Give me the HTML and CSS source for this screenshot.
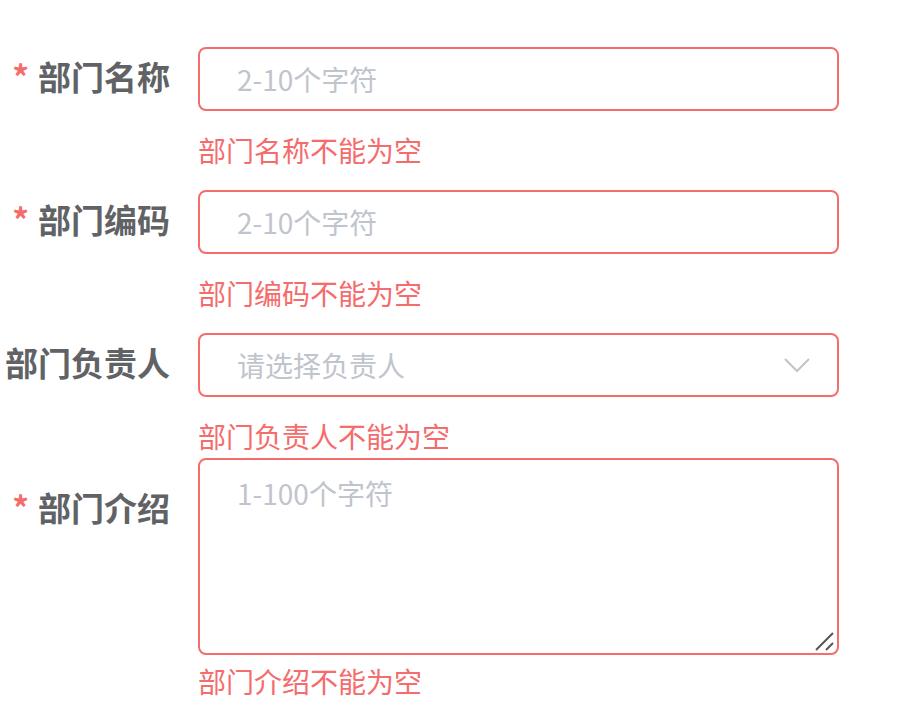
FILE: index.html
```html
<!DOCTYPE html>
<html lang="zh-CN">
<head>
  <meta charset="UTF-8">
  <meta name="viewport" content="width=device-width, initial-scale=1.0">
  <title>部门信息</title>
  <link rel="stylesheet" href="styles.css">
</head>
<body>
  <form class="dept-form">
    <div class="form-item">
      <label class="form-label is-required">部门名称</label>
      <div class="form-content">
        <input class="form-input" type="text" placeholder="2-10个字符">
        <div class="form-error">部门名称不能为空</div>
      </div>
    </div>

    <div class="form-item">
      <label class="form-label is-required">部门编码</label>
      <div class="form-content">
        <input class="form-input" type="text" placeholder="2-10个字符">
        <div class="form-error">部门编码不能为空</div>
      </div>
    </div>

    <div class="form-item form-item--tight">
      <label class="form-label">部门负责人</label>
      <div class="form-content">
        <div class="select-box">
          <input class="form-input" type="text" readonly placeholder="请选择负责人">
          <!-- 下拉箭头 -->
          <svg class="select-arrow" width="26" height="16" viewBox="0 0 26 16">
            <polyline points="1,2 13,14 25,2" fill="none" stroke="#c0c4cc" stroke-width="2"/>
          </svg>
        </div>
        <div class="form-error">部门负责人不能为空</div>
      </div>
    </div>

    <div class="form-item">
      <label class="form-label form-label--top is-required">部门介绍</label>
      <div class="form-content">
        <div class="textarea-box">
          <textarea class="form-textarea" placeholder="1-100个字符"></textarea>
          <!-- 拖拽手柄 -->
          <svg class="resize-grip" width="20" height="20" viewBox="0 0 20 20">
            <line x1="1" y1="19" x2="18" y2="2" stroke="#555" stroke-width="2"/>
            <line x1="11" y1="19" x2="18" y2="12" stroke="#555" stroke-width="2"/>
          </svg>
        </div>
        <div class="form-error form-error--close">部门介绍不能为空</div>
      </div>
    </div>
  </form>
</body>
</html>
```

FILE: styles.css
```css
body {
  margin: 0;
  background: #fff;
  font-family: "Noto Sans CJK SC", "Noto Sans", sans-serif;
}
.dept-form {
  padding-top: 47px;
  width: 839px;
}
.form-item {
  display: flex;
  margin-bottom: 26px;
}
.form-item--tight {
  margin-bottom: 8px;
}
.form-label {
  flex: 0 0 170px;
  padding-right: 28px;
  text-align: right;
  font-size: 33px;
  font-weight: 600;
  line-height: 58px;
  color: #606266;
}
.form-label--top {
  padding-top: 20px;
}
.is-required::before {
  content: "*";
  color: #f56c6c;
  margin-right: 9px;
}
.form-content {
  flex: 1;
}
.form-input,
.form-textarea {
  display: block;
  box-sizing: border-box;
  width: 100%;
  border: 2px solid #f56c6c;
  border-radius: 8px;
  background: #fff;
  font-family: inherit;
  font-size: 28px;
  color: #606266;
  outline: none;
}
.form-input {
  height: 64px;
  padding: 0 37px;
}
.form-input::placeholder,
.form-textarea::placeholder {
  color: #c0c4cc;
}
.select-box {
  position: relative;
}
.select-arrow {
  position: absolute;
  right: 29px;
  top: 24px;
}
.textarea-box {
  position: relative;
}
.form-textarea {
  height: 197px;
  padding: 12px 37px;
  line-height: 42px;
  resize: none;
}
.resize-grip {
  position: absolute;
  right: 4px;
  bottom: 4px;
}
.form-error {
  padding-top: 25px;
  font-size: 28px;
  line-height: 28px;
  color: #f56c6c;
}
.form-error--close {
  padding-top: 12px;
}
```
